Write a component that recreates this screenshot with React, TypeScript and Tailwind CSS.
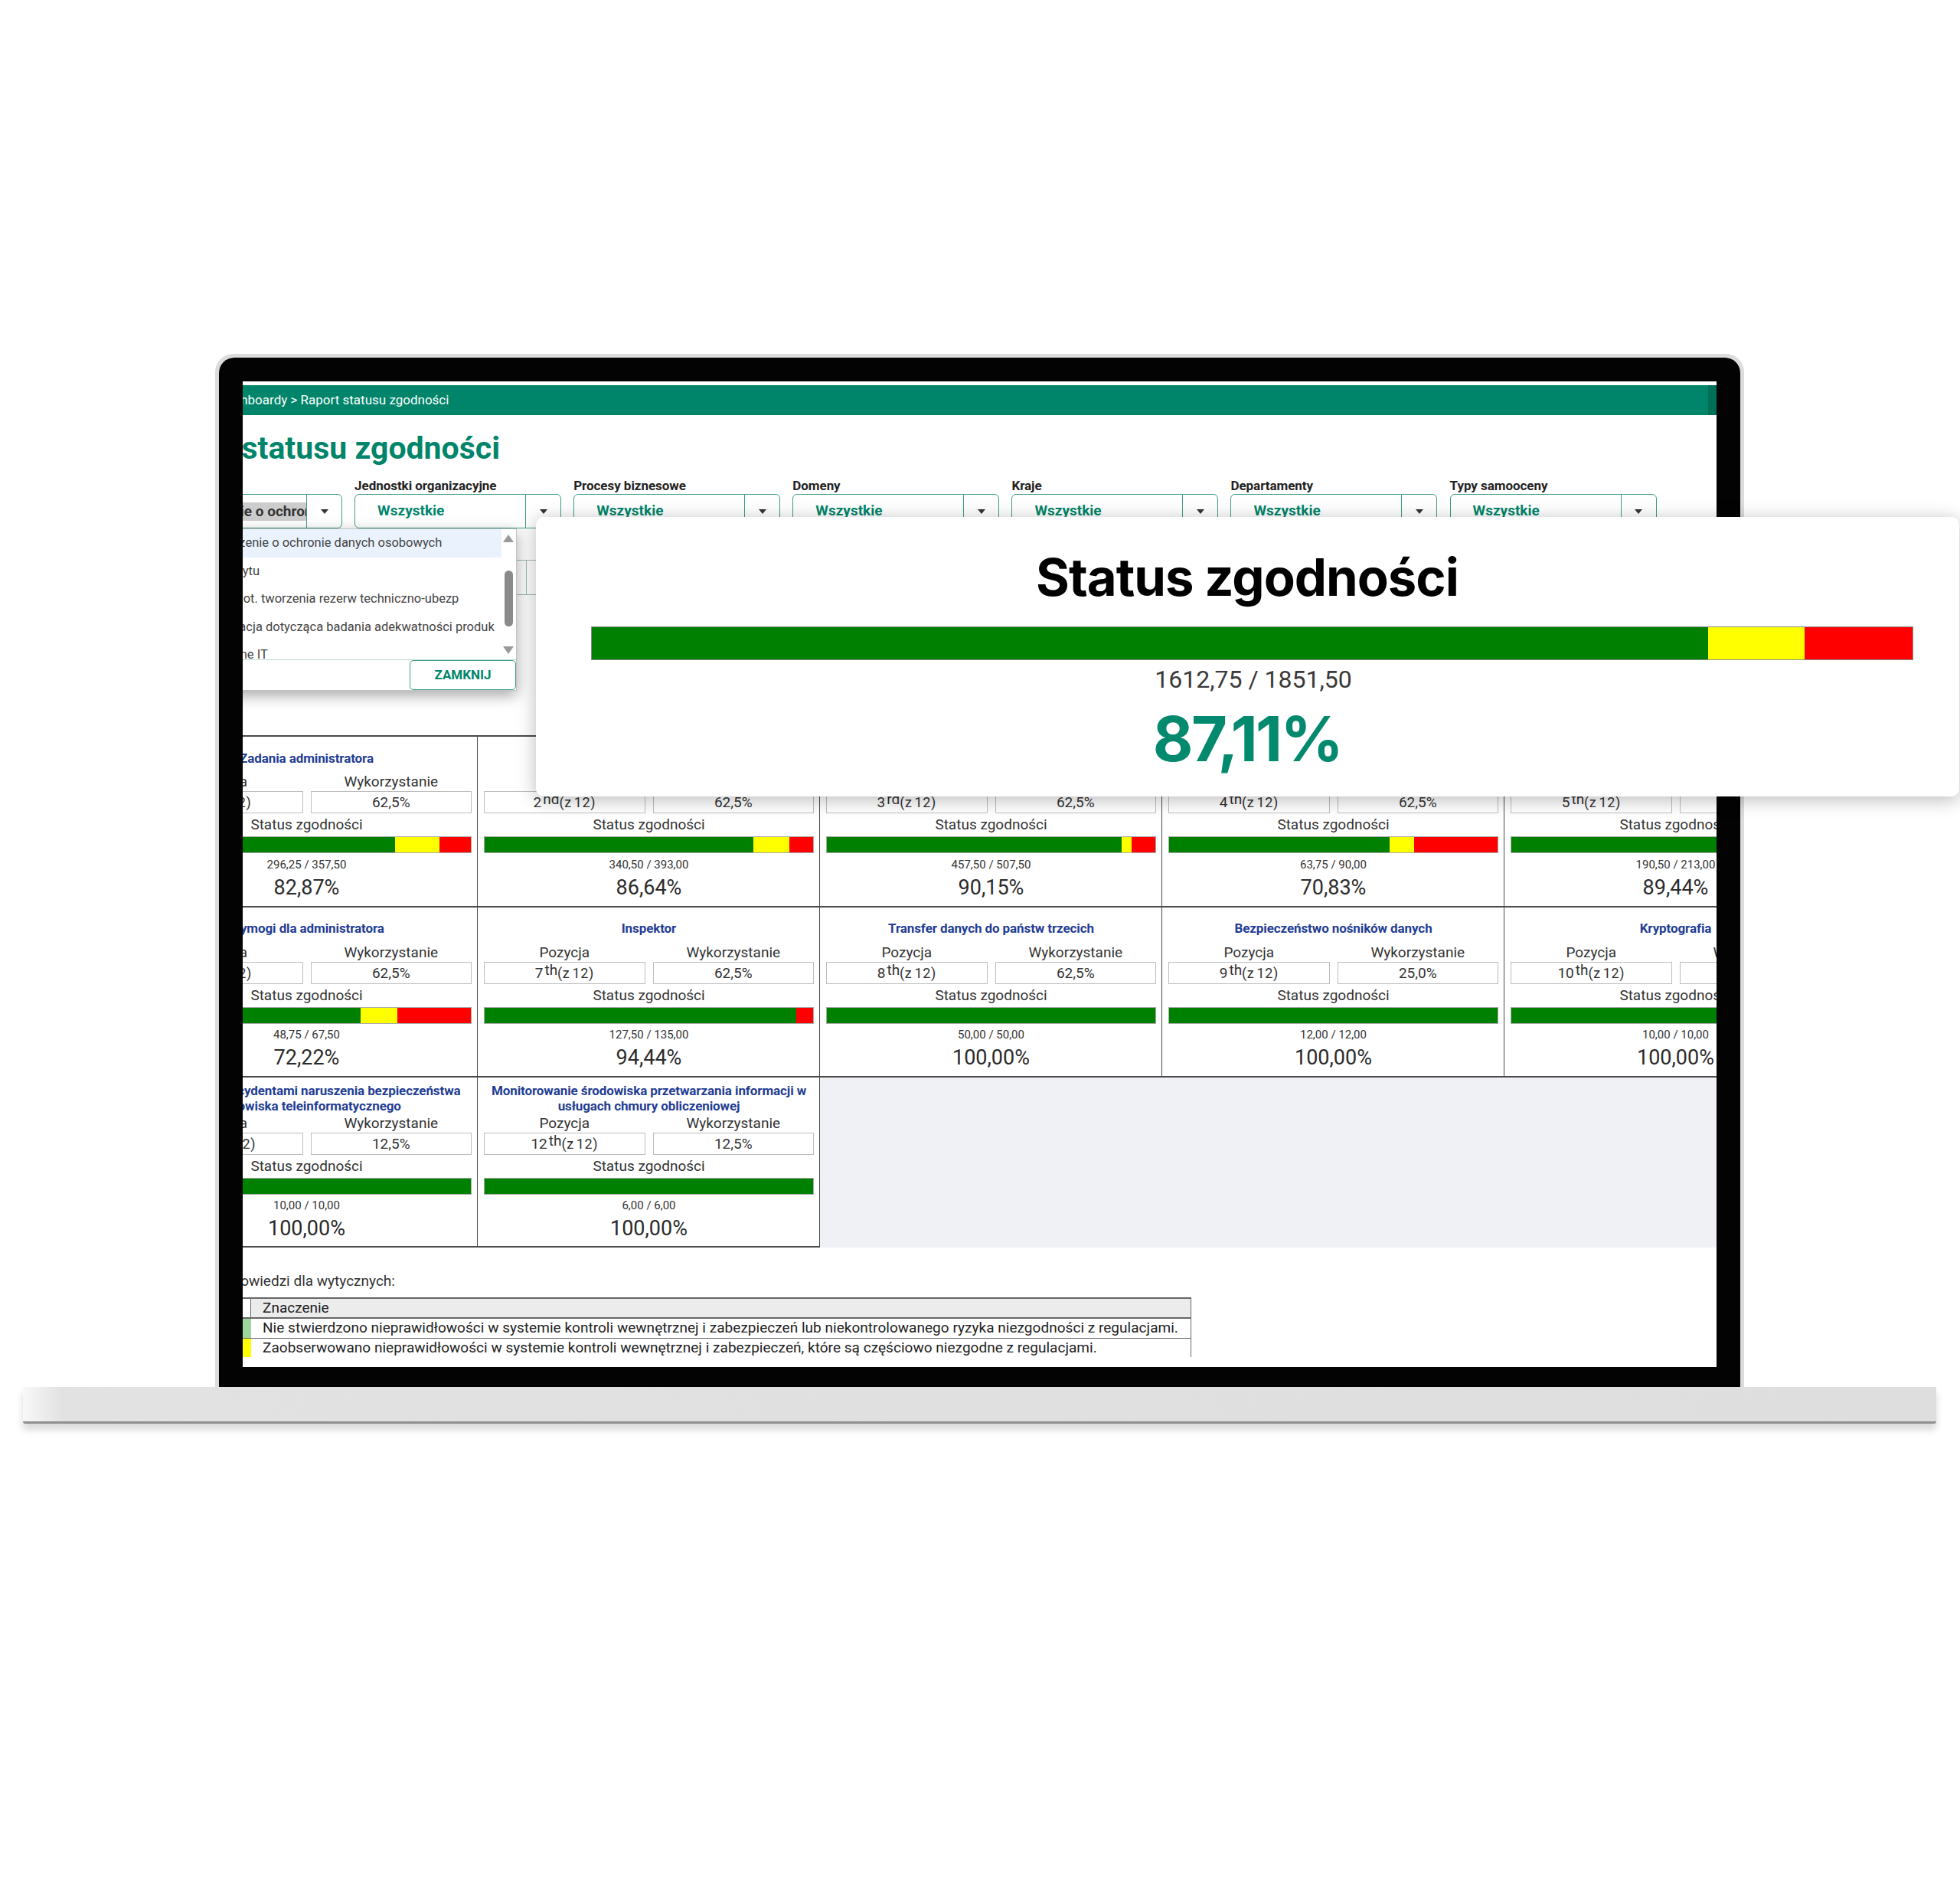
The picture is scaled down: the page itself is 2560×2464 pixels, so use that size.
const filters = [
  { label: "Regulacje", first: true },
  { label: "Jednostki organizacyjne" },
  { label: "Procesy biznesowe" },
  { label: "Domeny" },
  { label: "Kraje" },
  { label: "Departamenty" },
  { label: "Typy samooceny" },
];

type Cell = {
  title: string[];
  rank: string;
  suf: string;
  use: string;
  g: number;
  y: number;
  r: number;
  nums: string;
  pct: string;
};

const rows: Cell[][] = [
  [
    { title: ["Zadania administratora"], rank: "1", suf: "st", use: "62,5%", g: 77, y: 13.5, r: 9.5, nums: "296,25 / 357,50", pct: "82,87%" },
    { title: ["Podstawy przetwarzania"], rank: "2", suf: "nd", use: "62,5%", g: 81.9, y: 10.9, r: 7.2, nums: "340,50 / 393,00", pct: "86,64%" },
    { title: ["Prawa osób"], rank: "3", suf: "rd", use: "62,5%", g: 89.7, y: 3.1, r: 7.2, nums: "457,50 / 507,50", pct: "90,15%" },
    { title: ["Podmioty przetwarzające"], rank: "4", suf: "th", use: "62,5%", g: 67.2, y: 7.5, r: 25.3, nums: "63,75 / 90,00", pct: "70,83%" },
    { title: ["Rejestry czynności"], rank: "5", suf: "th", use: "62,5%", g: 84, y: 8, r: 8, nums: "190,50 / 213,00", pct: "89,44%" },
  ],
  [
    { title: ["Wymogi dla administratora"], rank: "6", suf: "th", use: "62,5%", g: 66.5, y: 11.1, r: 22.4, nums: "48,75 / 67,50", pct: "72,22%" },
    { title: ["Inspektor"], rank: "7", suf: "th", use: "62,5%", g: 94.8, y: 0, r: 5.2, nums: "127,50 / 135,00", pct: "94,44%" },
    { title: ["Transfer danych do państw trzecich"], rank: "8", suf: "th", use: "62,5%", g: 100, y: 0, r: 0, nums: "50,00 / 50,00", pct: "100,00%" },
    { title: ["Bezpieczeństwo nośników danych"], rank: "9", suf: "th", use: "25,0%", g: 100, y: 0, r: 0, nums: "12,00 / 12,00", pct: "100,00%" },
    { title: ["Kryptografia"], rank: "10", suf: "th", use: "25,0%", g: 100, y: 0, r: 0, nums: "10,00 / 10,00", pct: "100,00%" },
  ],
  [
    { title: ["Zarządzanie incydentami naruszenia bezpieczeństwa", "środowiska teleinformatycznego"], rank: "11", suf: "th", use: "12,5%", g: 100, y: 0, r: 0, nums: "10,00 / 10,00", pct: "100,00%" },
    { title: ["Monitorowanie środowiska przetwarzania informacji w", "usługach chmury obliczeniowej"], rank: "12", suf: "th", use: "12,5%", g: 100, y: 0, r: 0, nums: "6,00 / 6,00", pct: "100,00%" },
  ],
];

const options = [
  "Rozporządzenie o ochronie danych osobowych",
  "Ocena kredytu",
  "Wytyczne dot. tworzenia rezerw techniczno-ubezp",
  "Rekomendacja dotycząca badania adekwatności produk",
  "Usługi ważne IT",
];

function Caret() {
  return (
    <svg width="12" height="8" viewBox="0 0 12 8">
      <polygon points="1,1 11,1 6,7" fill="#333" />
    </svg>
  );
}

function Bar({ g, y, r }: { g: number; y: number; r: number }) {
  return (
    <div className="flex h-full w-full">
      <div className="h-full bg-[#008000]" style={{ width: `${g}%` }} />
      <div className="h-full bg-[#ffff00]" style={{ width: `${y}%` }} />
      <div className="h-full bg-[#ff0000]" style={{ width: `${r}%` }} />
    </div>
  );
}

function CellView({ c, tall }: { c: Cell; tall: boolean }) {
  return (
    <div className={`flex flex-col pl-[8px] pr-[7px] border-r-[1.5px] border-b-2 border-[#4a4a4a] text-[#333] ${tall ? "h-[223px]" : "h-[222px]"}`}>
      <div className={`flex flex-col items-center justify-center text-[17px] leading-[20px] font-bold text-[#1f3d94] whitespace-nowrap tracking-[-0.1px] ${tall ? "pt-[6px]" : "pt-[4px]"} ${c.title.length > 1 ? "h-[50px]" : "h-[49px]"}`}>
        {c.title.map((t) => (
          <div key={t}>{t}</div>
        ))}
      </div>
      <div className="grid grid-cols-2 gap-[10px] h-[20px] text-[19px] leading-[20px] text-center text-[#333]">
        <div>Pozycja</div>
        <div>Wykorzystanie</div>
      </div>
      <div className="grid grid-cols-2 gap-[10px] mt-[2px] h-[29px] text-[19px] text-center text-[#333]">
        <div className="border-[1.5px] border-[#bdbdbd] flex items-center justify-center leading-[24px]">
          <span>{c.rank}</span>
          <span className="text-[19px] -translate-y-[4px] ml-[2px]">{c.suf}</span>
          <span className="text-[18px] tracking-[0.6px] [word-spacing:-2px]">(z 12)</span>
        </div>
        <div className="border-[1.5px] border-[#bdbdbd] flex items-center justify-center leading-[24px]">{c.use}</div>
      </div>
      <div className="h-[30px] flex items-center justify-center text-[19px]">Status zgodności</div>
      <div className="h-[22px] border border-[#aaa]">
        <Bar g={c.g} y={c.y} r={c.r} />
      </div>
      <div className={`flex items-center justify-center text-[15px] ${tall ? "h-[29px] pt-[1px]" : "h-[28px]"}`}>{c.nums}</div>
      <div className="h-[32px] flex items-center justify-center text-[27px] text-[#2b2b2b]">{c.pct}</div>
    </div>
  );
}

export default function App() {
  return (
    <div className="relative w-[2560px] h-[2464px] bg-white overflow-hidden pt-[462px] [font-family:Roboto,sans-serif]">
      {/* Lid */}
      <div className="ml-[281px] w-[1997px] border-x-[5px] border-t-[5px] border-[#dcdcdc] rounded-t-[24px]">
        <div className="bg-[#030303] rounded-t-[20px] pt-[31px] px-[31px] pb-[26px]">
          <div className="relative h-[1287px] bg-white overflow-hidden pt-[5px]">
            <div className="h-[39px] bg-[#00856a] flex items-center">
              <div className="-ml-[140px] pl-[108px] text-white text-[17px] whitespace-nowrap">Dashboardy &gt; Raport statusu zgodności</div>
              <div className="ml-auto w-[11px] h-full bg-[#006f58]" />
            </div>
            <div className="-ml-[140px] w-[2300px]">
              <div className="mt-[19px] pl-[4px] h-[48px] text-[41px] leading-[48px] font-bold text-[#00856a] whitespace-nowrap">Raport statusu zgodności</div>
              {/* Filters */}
              <div className="relative mt-[15px]">
                <div className="flex gap-[16.1px]">
                  {filters.map((f) => (
                    <div key={f.label} className="w-[270px] shrink-0">
                      <div className="h-[21px] text-[17px] leading-[20px] font-bold text-[#222] whitespace-nowrap tracking-[-0.05px]">{f.label}</div>
                      <div className="h-[45px] border-[1.5px] border-[#3f9c88] rounded-[6px] flex items-center">
                        <div className={`flex-1 min-w-0 h-full overflow-hidden flex items-center ${f.first ? "pl-[14px]" : "pl-[29px]"}`}>
                          {f.first ? (
                            <span className="bg-[#cccccc] h-[24px] leading-[24px] text-[19px] font-bold text-[#333] whitespace-nowrap">Rozporządzenie o ochronie danych</span>
                          ) : (
                            <span className="text-[19px] font-bold text-[#00856a] whitespace-nowrap">Wszystkie</span>
                          )}
                        </div>
                        <div className="w-[46px] h-full border-l-[1.5px] border-[#3f9c88] flex items-center justify-center">
                          <Caret />
                        </div>
                      </div>
                    </div>
                  ))}
                </div>
                <div className="flex gap-[16.1px] mt-[41px]">
                  {[0, 1].map((i) => (
                    <div key={i} className="w-[270px] h-[46px] border-y-[1.5px] border-[#9db9b2] flex justify-end">
                      <div className="w-[46px] h-full border-l-[1.5px] border-[#9db9b2]" />
                    </div>
                  ))}
                </div>
                {/* Dropdown */}
                <div className="absolute left-0 top-[66px] w-[498px] h-[212px] bg-white border border-[#c4c4c4] shadow-[0_6px_18px_rgba(0,0,0,0.35)] flex flex-col">
                  <div className="relative h-[172px] overflow-hidden border-b border-[#bcd9d2]">
                    {options.map((o, i) => (
                      <div
                        key={o}
                        className={`h-[36.6px] w-[477px] overflow-hidden flex items-center pl-[56px] text-[16.5px] text-[#444] whitespace-nowrap ${i === 0 ? "bg-[#eaf2fd]" : ""}`}
                      >
                        {o}
                      </div>
                    ))}
                    <div className="absolute right-0 top-0 bottom-0 w-[20px] flex flex-col items-center justify-between py-[7px]">
                      <svg width="14" height="10" viewBox="0 0 14 10">
                        <polygon points="7,0 14,10 0,10" fill="#9a9a9a" />
                      </svg>
                      <div className="absolute top-[54px] w-[11px] h-[73px] rounded-[6px] bg-[#8a8a8a]" />
                      <svg width="14" height="10" viewBox="0 0 14 10">
                        <polygon points="0,0 14,0 7,10" fill="#9a9a9a" />
                      </svg>
                    </div>
                  </div>
                  <div className="flex justify-end">
                    <div className="w-[139px] h-[39px] border-[1.5px] border-[#3f9c88] rounded-[5px] flex items-center justify-center text-[17px] font-bold text-[#00856a]">ZAMKNIJ</div>
                  </div>
                </div>
              </div>
              {/* Grid */}
              <div className="mt-[183px] grid grid-cols-[repeat(5,447px)] border-t-2 border-[#4a4a4a]">
                {rows.map((row, ri) =>
                  row.map((c) => <CellView key={c.title[0]} c={c} tall={ri === 0} />)
                )}
                <div className="col-span-3 bg-[#eff1f5]" />
              </div>
              {/* Legend */}
              <div className="mt-[34px] pl-[54px] h-[20px] text-[19px] leading-[20px] text-[#333] whitespace-nowrap">Skala odpowiedzi dla wytycznych:</div>
              <div className="mt-[11px] w-[1379px] border-x-[1.5px] border-t-2 border-[#666] text-[19px] text-[#222]">
                <div className="flex h-[26px] border-b-2 border-[#666] bg-[#ececec]">
                  <div className="w-[150px] border-r-[1.5px] border-[#666] bg-white" />
                  <div className="pl-[15px] leading-[24px]">Znaczenie</div>
                </div>
                <div className="flex h-[26px] border-b-[1.5px] border-[#666]">
                  <div className="w-[150px] bg-[#9ed49e]" />
                  <div className="pl-[15px] leading-[24px] whitespace-nowrap tracking-[0.03px]">Nie stwierdzono nieprawidłowości w systemie kontroli wewnętrznej i zabezpieczeń lub niekontrolowanego ryzyka niezgodności z regulacjami.</div>
                </div>
                <div className="flex h-[24px]">
                  <div className="w-[150px] bg-[#ffff00]" />
                  <div className="pl-[15px] leading-[24px] whitespace-nowrap tracking-[0.03px]">Zaobserwowano nieprawidłowości w systemie kontroli wewnętrznej i zabezpieczeń, które są częściowo niezgodne z regulacjami.</div>
                </div>
              </div>
            </div>
          </div>
        </div>
      </div>
      {/* Base */}
      <div className="ml-[30px] w-[2499px] h-[48px] bg-gradient-to-r from-[#f8f8f8] via-[#e2e2e2] via-[2%] to-[#dedede] border-b-[3px] border-[#8f8f8f] shadow-[0_8px_10px_rgba(0,0,0,0.15)] rounded-b-[3px]" />
      {/* Overlay card */}
      <div className="absolute left-[700px] top-[675px] w-[1859px] h-[365px] bg-white rounded-[10px] shadow-[0_4px_24px_rgba(0,0,0,0.28)] flex flex-col items-center pt-[39px] pl-[72px] pr-[60px]">
        <div className="h-[80px] leading-[80px] text-[67px] font-bold text-black [font-family:Inter,sans-serif] tracking-[-1px] -ml-[13px]">Status zgodności</div>
        <div className="mt-[24px] w-full h-[44px] border border-[#8a8a8a]">
          <Bar g={84.5} y={7.3} r={8.2} />
        </div>
        <div className="mt-[5px] h-[40px] leading-[40px] text-[32px] text-[#3a3a3a] pl-[3px]">1612,75 / 1851,50</div>
        <div className="mt-[16px] h-[84px] leading-[84px] text-[81px] font-bold text-[#03896e] [font-family:Inter,sans-serif] tracking-[-2.5px] -ml-[13px]">87,11%</div>
      </div>
    </div>
  );
}
